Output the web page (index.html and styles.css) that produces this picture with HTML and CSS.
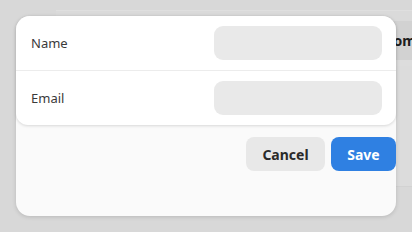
FILE: index.html
```html
<!DOCTYPE html>
<html lang="en">
<head>
    <meta charset="UTF-8">
    <meta name="viewport" content="width=device-width, initial-scale=1.0">
    <title>Edit Contact</title>
    <link rel="stylesheet" href="styles.css">
</head>
<body>

    <!-- Page behind the dialog -->
    <div class="page">
        <div class="table">
            <div class="table-head">
                <span class="col-name">Name</span>
                <span class="col-custom">Custom</span>
            </div>
            <div class="table-body"></div>
        </div>
    </div>

    <div class="overlay"></div>

    <!-- Dialog -->
    <div class="dialog">
        <div class="card">
            <div class="row">
                <label for="name">Name</label>
                <input type="text" id="name">
            </div>
            <div class="row">
                <label for="email">Email</label>
                <input type="email" id="email">
            </div>
        </div>
        <div class="actions">
            <button class="btn btn-cancel">Cancel</button>
            <button class="btn btn-save">Save</button>
        </div>
    </div>

</body>
</html>
```

FILE: styles.css
```css
/* General Styling */
body {
    font-family: 'Noto Sans', 'Open Sans', sans-serif;
    margin: 0;
    padding: 0;
    width: 412px;
    height: 232px;
    overflow: hidden;
    background: #f3f3f3;
    color: #333;
}

/* Background page */
.page {
    padding: 10px 0 0 56px;
}

.table {
    border-top: 1px solid #fbfbfb;
    background: #f5f5f5;
}

.table-head {
    display: flex;
    justify-content: space-between;
    align-items: center;
    height: 39px;
    margin-top: 10px;
    background: #ececec;
    font-size: 14px;
    font-weight: bold;
    color: #222;
}

.col-name {
    padding-left: 20px;
}

.col-custom {
    margin-right: -4px;
}

.table-body {
    height: 120px;
    border-top: 6px solid #f9f9f9;
    background: #f8f8f8;
    border-bottom: 1px solid #ececec;
}

.overlay {
    position: absolute;
    inset: 0;
    background: rgba(0, 0, 0, 0.11);
}

/* Dialog */
.dialog {
    position: absolute;
    top: 16px;
    left: 16px;
    width: 380px;
    height: 200px;
    background: #fafafa;
    border-radius: 14px;
    box-shadow: 0 1px 4px rgba(0, 0, 0, 0.15);
}

.card {
    background: #fff;
    border-radius: 14px 14px 12px 12px;
    box-shadow: 0 1px 3px rgba(0, 0, 0, 0.14);
}

.row {
    display: flex;
    justify-content: space-between;
    align-items: center;
    height: 54px;
    padding: 0 14px 0 15px;
}

.row + .row {
    height: 54px;
    border-top: 1px solid #ececec;
}

label {
    font-size: 13px;
    color: #3a3a3a;
}

input {
    width: 168px;
    height: 34px;
    box-sizing: border-box;
    border: none;
    border-radius: 9px;
    background: #e9e9e9;
    outline: none;
}

.actions {
    display: flex;
    justify-content: flex-end;
    gap: 6px;
    margin-top: 12px;
}

.btn {
    height: 34px;
    border: none;
    border-radius: 8px;
    font-family: inherit;
    font-size: 14px;
    font-weight: bold;
    cursor: pointer;
}

.btn-cancel {
    width: 79px;
    background: #e8e8e8;
    color: #2a2a2a;
}

.btn-save {
    width: 65px;
    background: #2f80e2;
    color: #fff;
}
```
